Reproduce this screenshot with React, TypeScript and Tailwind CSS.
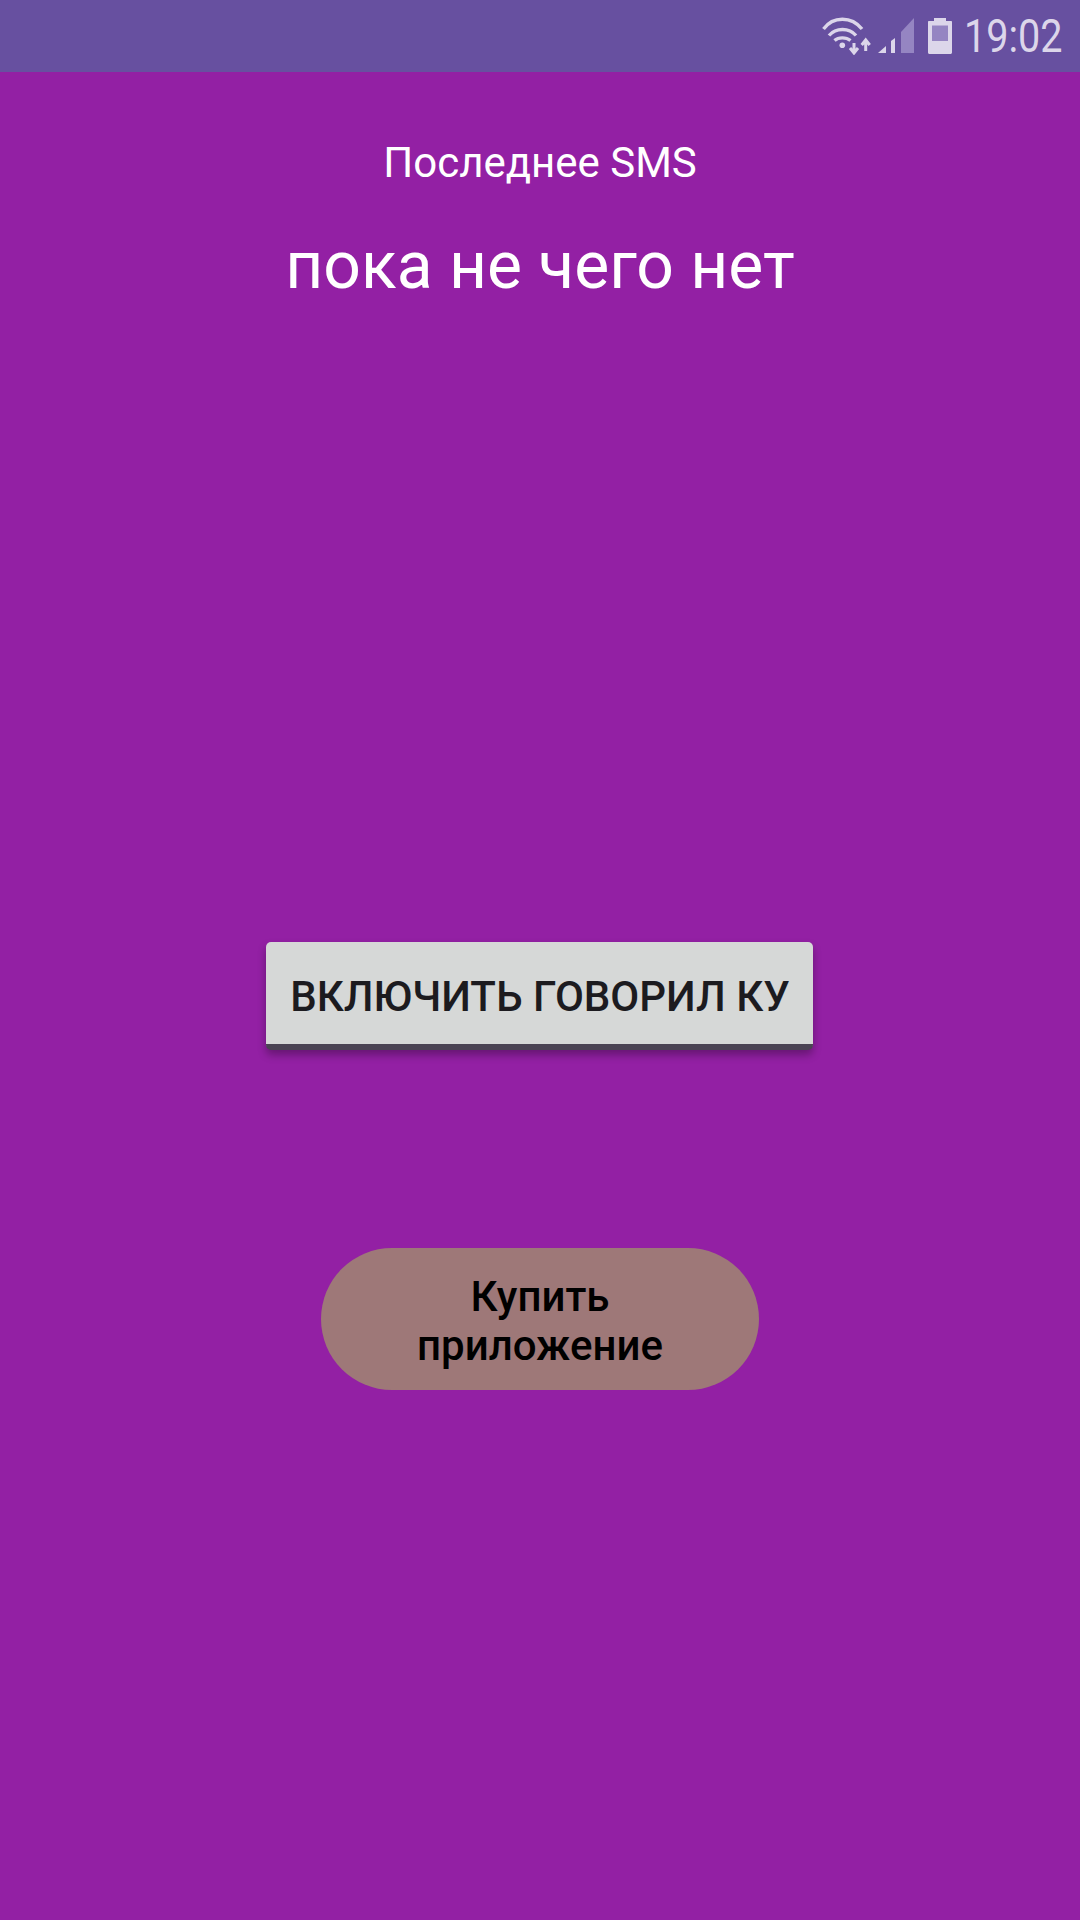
const font = { fontFamily: 'Roboto, sans-serif' };

function WifiIcon() {
  return (
    <svg width="49" height="38" viewBox="0 0 49 38" fill="none" stroke="#dcd6ea">
      <path d="M1.5 12C11 -1 29.5 -1 40 12" strokeWidth="3.4" />
      <path d="M7 18.5C14 10.5 27 10.5 34 18.5" strokeWidth="3.4" />
      <path d="M12.5 23.5C16.5 20 24 20 28.5 23.5" strokeWidth="3.4" />
      <circle cx="20.3" cy="28.3" r="2.8" fill="#dcd6ea" stroke="none" />
      <path d="M32 26V35M28 31L32 36L36 31" strokeWidth="3" />
      <path d="M43.7 34V24M39.7 28L43.7 23L47.7 28" strokeWidth="3" />
    </svg>
  );
}

function SignalIcon() {
  return (
    <svg width="36" height="36" viewBox="0 0 36 36">
      <path d="M0 35H8V28Z" fill="#dcd6ea" />
      <path d="M13 35H17V20L13 23Z" fill="#dcd6ea" />
      <path d="M23 35H36V0L23 14Z" fill="#9585c2" />
    </svg>
  );
}

function BatteryIcon() {
  return (
    <svg width="24" height="36" viewBox="0 0 24 36">
      <path d="M6 0H18V3H23C23.6 3 24 3.4 24 4V34.5C24 35.3 23.3 36 22.5 36H1.5C0.7 36 0 35.3 0 34.5V4C0 3.4 0.4 3 1 3H6Z" fill="#dcd6ea" />
      <rect x="4" y="7.5" width="16" height="15.5" fill="#9585c2" />
    </svg>
  );
}

export default function App() {
  return (
    <div className="flex flex-col w-[1080px] h-[1920px] bg-[#9320a4] overflow-hidden" style={font}>
      {/* Status bar */}
      <div className="flex items-center justify-end h-[72px] pr-[18px] bg-[#6750a0]">
        <WifiIcon />
        <div className="ml-[7px]">
          <SignalIcon />
        </div>
        <div className="ml-[14px]">
          <BatteryIcon />
        </div>
        <div className="w-[97px] ml-[13px] flex justify-center text-[46px] leading-none text-[#dcd6ea]">
          <span className="scale-x-[0.86]">19:02</span>
        </div>
      </div>

      <main className="flex flex-col items-center">
        <div className="mt-[67px] text-[42px] leading-[47px] text-white">Последнее SMS</div>
        <div className="mt-[45px] text-[66px] leading-[70px] text-white">пока не чего нет</div>

        <button className="flex items-center justify-center w-[547px] h-[108px] mt-[641px] pt-[7px] pl-[2px] -translate-x-px bg-[#d6d8d7] border-b-[6px] border-[#4a4353] rounded-[5px] shadow-[0_5px_8px_rgba(0,0,0,0.3)] text-[42px] font-medium text-[#1c1b1f]">
          ВКЛЮЧИТЬ ГОВОРИЛ КУ
        </button>

        <button className="w-[438px] h-[142px] mt-[198px] px-[60px] pt-[3px] bg-[#9e7878] rounded-[71px] text-[42px] leading-[49px] font-medium text-black">
          Купить приложение
        </button>
      </main>
    </div>
  );
}
